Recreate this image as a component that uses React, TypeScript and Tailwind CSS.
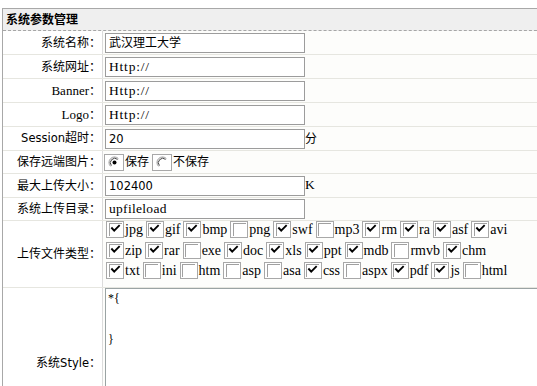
import React from "react";

const CJK = "font-['Liberation_Serif','Noto_Sans_CJK_SC',serif]";

function Check({ on }: { on: boolean }) {
  return (
    <span className="flex h-[17px] w-[18px] shrink-0 items-center justify-center border border-[#a8a8a8] bg-white">
      <span className="relative h-[13px] w-[13px] border-l border-t border-[#a0a0a0] bg-white">
        {on && (
          <svg width="13" height="13" viewBox="0 0 13 13" className="absolute -left-[1px] -top-[1px]">
            <path d="M3 5.2 L5.2 7.6 L10 2.8" stroke="#000" strokeWidth="1.9" fill="none" strokeLinecap="square" />
          </svg>
        )}
      </span>
    </span>
  );
}

function Radio({ on }: { on: boolean }) {
  return (
    <span className="flex h-[17px] w-[20px] shrink-0 items-center justify-center border border-[#a8a8a8] bg-white">
      <svg width="13" height="13" viewBox="0 0 13 13">
        <path d="M2.6 10.4 A5.5 5.5 0 0 1 10.4 2.6" stroke="#9a9a9a" strokeWidth="1" fill="none" />
        <path d="M3.4 9.6 A4.4 4.4 0 0 1 9.6 3.4" stroke="#444" strokeWidth="1" fill="none" />
        {on && <circle cx="6.5" cy="6.5" r="2" fill="#000" />}
      </svg>
    </span>
  );
}

function Field({ children }: { children: React.ReactNode }) {
  return (
    <div className="flex h-[20px] w-[200px] items-center border border-[#9c9c9c] bg-white pl-[3px] pt-[1px] text-[12px] text-black">
      {children}
    </div>
  );
}

function Label({ children }: { children: React.ReactNode }) {
  return (
    <div className={`flex w-[100px] shrink-0 items-center justify-end border-r border-[#dcdcdc] bg-white pr-[1px] text-[12px] text-black ${CJK}`}>
      <span className="whitespace-nowrap">{children}</span>
    </div>
  );
}

const types: [string, boolean][][] = [
  [["jpg", true], ["gif", true], ["bmp", true], ["png", false], ["swf", true], ["mp3", false], ["rm", true], ["ra", true], ["asf", true], ["avi", true]],
  [["zip", true], ["rar", true], ["exe", false], ["doc", true], ["xls", true], ["ppt", true], ["mdb", true], ["rmvb", false], ["chm", true]],
  [["txt", true], ["ini", false], ["htm", false], ["asp", false], ["asa", false], ["css", true], ["aspx", false], ["pdf", true], ["js", true], ["html", false]],
];

const serifLat = "font-['Liberation_Serif','Noto_Sans_CJK_SC',serif] text-[13.5px]";
const sansLat = "font-['DejaVu_Sans',sans-serif] text-[11.5px]";

export default function App() {
  return (
    <div className="h-[386px] w-full overflow-hidden bg-white">
      <div className="ml-[2px] mt-[8px] w-[570px] border-l border-t border-[#a8a8a8]">
        <div className={`flex h-[22px] items-center border-b border-dashed border-[#a6a6a6] bg-[#efefef] pl-[3px] text-[12px] font-bold text-black ${CJK}`}>
          系统参数管理
        </div>

        <div className="flex h-[24px] border-b border-[#e6e6e0]">
          <Label>系统名称：</Label>
          <div className="flex flex-1 items-center bg-[#fdfdfb] pl-[2px]">
            <Field><span className={CJK}>武汉理工大学</span></Field>
          </div>
        </div>

        <div className="flex h-[24px] border-b border-[#e6e6e0]">
          <Label>系统网址：</Label>
          <div className="flex flex-1 items-center bg-[#fdfdfb] pl-[2px]">
            <Field><span className={`${serifLat} tracking-[0.8px]`}>Http://</span></Field>
          </div>
        </div>

        <div className="flex h-[24px] border-b border-[#e6e6e0]">
          <Label><span className="text-[13px]">Banner</span>：</Label>
          <div className="flex flex-1 items-center bg-[#fdfdfb] pl-[2px]">
            <Field><span className={`${serifLat} tracking-[0.8px]`}>Http://</span></Field>
          </div>
        </div>

        <div className="flex h-[24px] border-b border-[#e6e6e0]">
          <Label><span className="text-[13px]">Logo</span>：</Label>
          <div className="flex flex-1 items-center bg-[#fdfdfb] pl-[2px]">
            <Field><span className={`${serifLat} tracking-[0.8px]`}>Http://</span></Field>
          </div>
        </div>

        <div className="flex h-[24px] border-b border-[#e6e6e0]">
          <Label><span className={sansLat}>Session</span>超时：</Label>
          <div className="flex flex-1 items-center bg-[#fdfdfb] pl-[2px]">
            <Field><span className={`${sansLat} pt-[2px]`}>20</span></Field>
            <span className={`text-[12px] text-black ${CJK}`}>分</span>
          </div>
        </div>

        <div className="flex h-[23px] border-b border-[#e6e6e0]">
          <Label>保存远端图片：</Label>
          <div className={`flex flex-1 items-center bg-[#fdfdfb] pl-[1px] text-[12px] text-black ${CJK}`}>
            <Radio on={true} />
            <span className="ml-[1px] mr-[3px]">保存</span>
            <Radio on={false} />
            <span className="ml-[1px]">不保存</span>
          </div>
        </div>

        <div className="flex h-[24px] border-b border-[#e6e6e0]">
          <Label>最大上传大小：</Label>
          <div className="flex flex-1 items-center bg-[#fdfdfb] pl-[2px]">
            <Field><span className={`${sansLat} pt-[2px]`}>102400</span></Field>
            <span className={`${serifLat} text-black`}>K</span>
          </div>
        </div>

        <div className="flex h-[23px] border-b border-[#e6e6e0]">
          <Label>系统上传目录：</Label>
          <div className="flex flex-1 items-center bg-[#fdfdfb] pl-[2px]">
            <Field><span className={`${serifLat} tracking-[0.3px]`}>upfileload</span></Field>
          </div>
        </div>

        <div className="flex h-[67px] border-b border-[#e6e6e0]">
          <Label>上传文件类型：</Label>
          <div className="flex flex-1 flex-col gap-[0.5px] bg-[#fdfdfb] pl-[3px]">
            {types.map((row, i) => (
              <div key={i} className="flex h-[20px] items-start gap-[3px]">
                {row.map(([name, on]) => (
                  <label key={name} className="flex items-start">
                    <Check on={on} />
                    <span className="ml-[1px] font-['Liberation_Serif',serif] text-[14px] leading-[17px] text-black">{name}</span>
                  </label>
                ))}
              </div>
            ))}
          </div>
        </div>

        <div className="flex h-[150px]">
          <Label>系统<span className="font-['DejaVu_Sans',sans-serif] text-[11.5px]">Style</span>：</Label>
          <StyleBox />
        </div>
      </div>
    </div>
  );
}

function StyleBox() {
  return (
    <div className="flex flex-1 items-start bg-[#fdfdfb] pl-[2px]">
      <textarea
        defaultValue={"*{\n\n\n}"}
        className="h-[148px] w-[450px] resize-none border border-[#9aa3a3] bg-white px-[2px] pt-[3px] font-['Liberation_Serif',serif] text-[12px] leading-[13.7px] text-black outline-none"
      />
    </div>
  );
}
